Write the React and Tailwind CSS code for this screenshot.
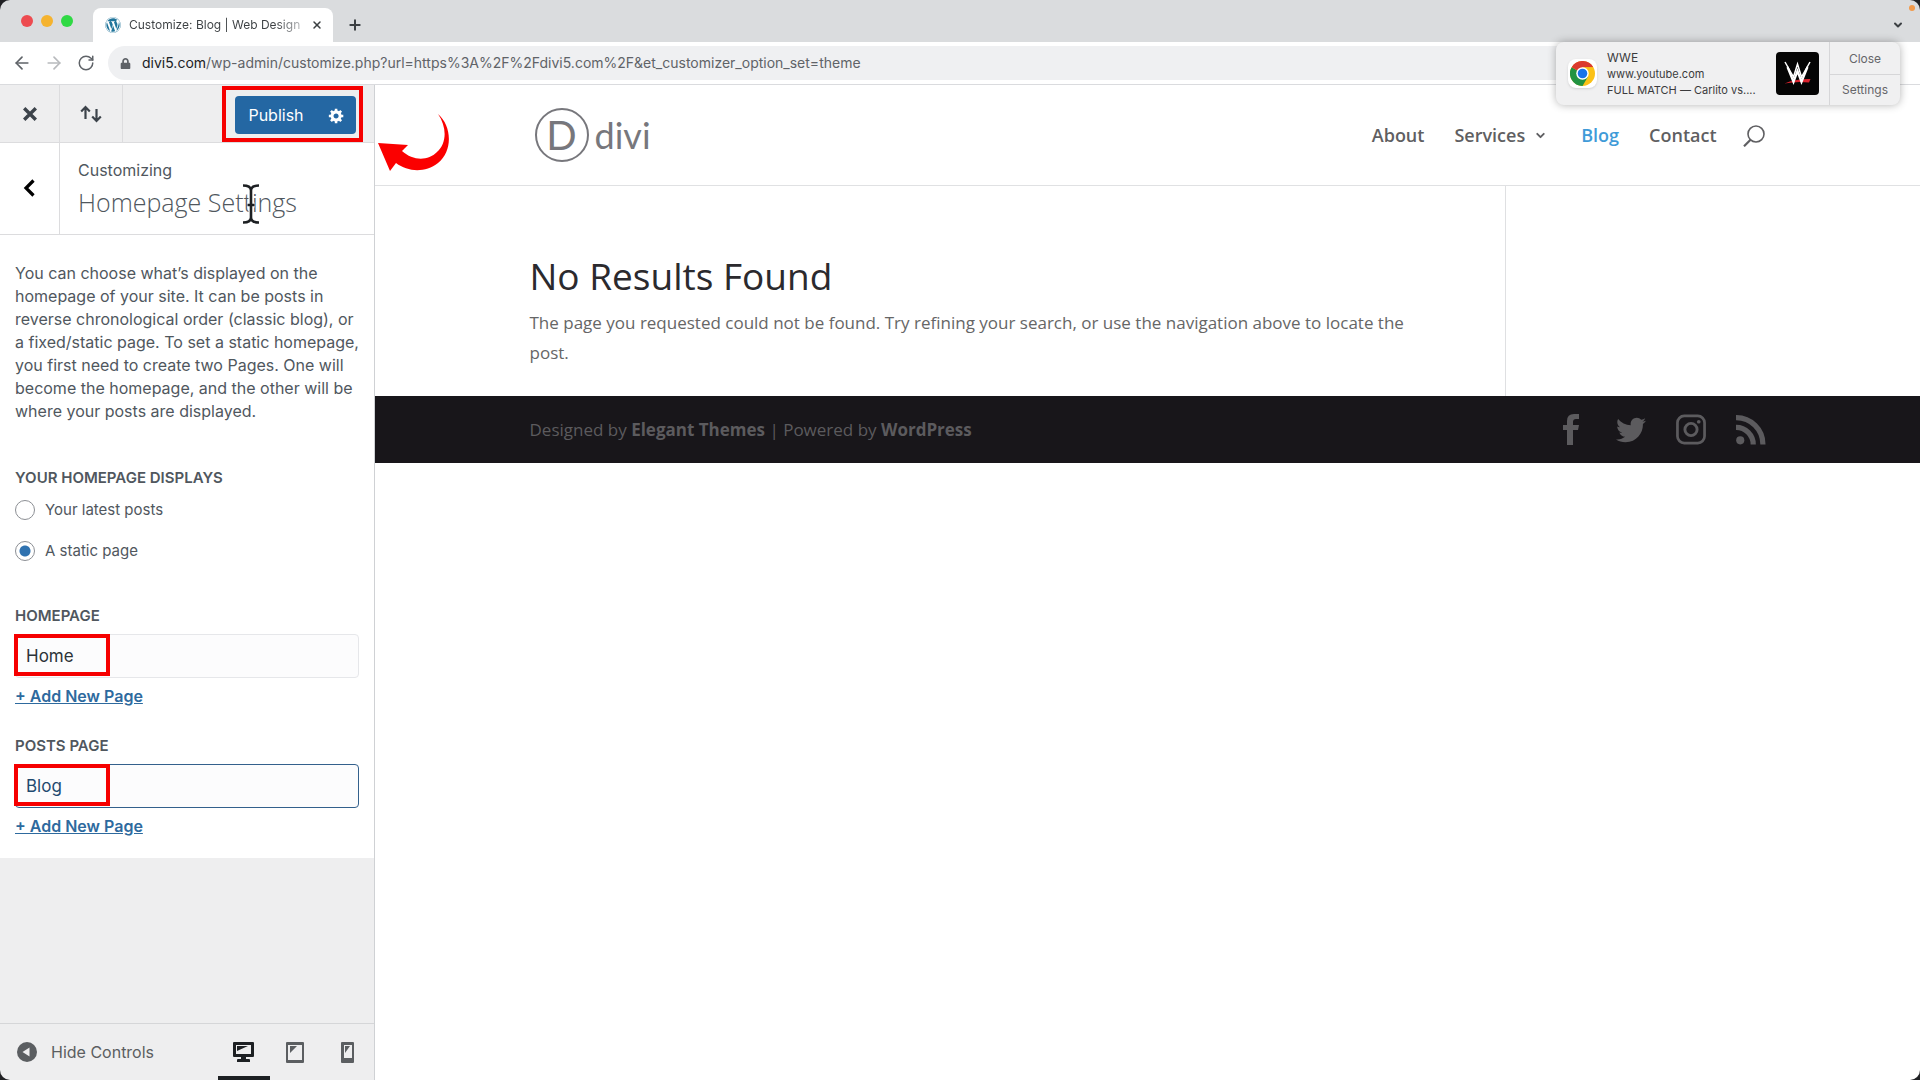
import { ArrowLeft, ArrowRight, ChevronDown, Plus, RotateCw, X } from 'lucide-react'
import { FaLock, FaTwitter, FaWordpress } from 'react-icons/fa'

const pages = ['Home', 'Blog', 'About', 'Contact']

function TabStrip() {
  return (
    <div className="flex h-[42px] items-end bg-[#dadcde]">
      <div className="flex gap-2 self-center pl-[21px] pr-5">
        <span className="size-3 rounded-full bg-[#ed4b50]" />
        <span className="size-3 rounded-full bg-[#f5b32f]" />
        <span className="size-3 rounded-full bg-[#2fd944]" />
      </div>
      <div className="flex h-[34px] w-60 items-center rounded-t-lg bg-white pl-3 pr-1.5">
        <FaWordpress className="size-4 shrink-0 text-[#21759b]" />
        <span className="ml-2 whitespace-nowrap bg-gradient-to-r from-[#3c4043] from-85% to-[#b5b7b9] bg-clip-text text-[12px] leading-5 text-transparent">
          Customize: Blog | Web Design
        </span>
        <button type="button" aria-label="Close tab" className="ml-auto p-1 text-[#3c4043]">
          <X className="size-3" strokeWidth={3} />
        </button>
      </div>
      <button type="button" aria-label="New tab" className="ml-2.5 self-center p-1 pt-3 text-[#3c4043]">
        <Plus className="size-4" strokeWidth={3} />
      </button>
      <button type="button" aria-label="Search tabs" className="ml-auto mr-4 self-center pt-2 text-[#3c4043]">
        <ChevronDown className="size-3" strokeWidth={4} />
      </button>
    </div>
  )
}

function AddressBar() {
  return (
    <div className="flex h-[43px] items-center border-b border-[#dadbde] bg-white pl-3 pr-16">
      <button type="button" aria-label="Back" className="text-[#5f6368]">
        <ArrowLeft className="size-5" strokeWidth={2} />
      </button>
      <button type="button" aria-label="Forward" className="ml-3 text-[#b8babd]">
        <ArrowRight className="size-5" strokeWidth={2} />
      </button>
      <button type="button" aria-label="Reload" className="ml-[13px] text-[#5f6368]">
        <RotateCw className="size-[18px]" strokeWidth={2} />
      </button>
      <div className="ml-[13px] flex h-[34px] flex-1 items-center rounded-full bg-[#eff0f2] pl-3">
        <FaLock className="size-[11px] text-[#5f6368]" />
        <p className="ml-[11px] text-[14px] leading-5 text-[#5f6368]">
          <span className="text-[#202124]">divi5.com</span>
          /wp-admin/customize.php?url=https%3A%2F%2Fdivi5.com%2F&amp;et_customizer_option_set=theme
        </p>
      </div>
    </div>
  )
}

function GearIcon() {
  return (
    <svg viewBox="0 0 20 20" className="size-[17px]" fill="currentColor" aria-hidden="true">
      <path d="M18 12h-2.180c-.170.700-.440 1.350-.810 1.930l1.540 1.540-2.100 2.100-1.540-1.540c-.580.360-1.230.630-1.910.790V19H8v-2.180c-.680-.160-1.330-.430-1.910-.790l-1.540 1.540-2.120-2.120 1.540-1.540c-.360-.580-.630-1.230-.790-1.910H1V9.030h2.170c.160-.700.440-1.350.800-1.940L2.430 5.550l2.100-2.100 1.540 1.540c.580-.370 1.240-.640 1.930-.810V2h3v2.180c.680.160 1.330.430 1.910.790l1.540-1.540 2.120 2.120-1.540 1.540c.360.590.640 1.240.800 1.940H18V12zm-8.500 1.500c1.660 0 3-1.340 3-3s-1.340-3-3-3-3 1.340-3 3 1.340 3 3 3z" />
    </svg>
  )
}

function PanelActions() {
  return (
    <div className="flex h-[58px] border-b border-[#dcdcde] bg-[#eeeeef]">
      <button type="button" aria-label="Close" className="flex w-[60px] items-center justify-center border-r border-[#dcdcde] text-[#3c434a]">
        <svg viewBox="0 0 14 14" className="size-[14px]" stroke="currentColor" strokeWidth="3.4" aria-hidden="true">
          <path d="M1.2 1.2l11.6 11.6M12.8 1.2L1.2 12.8" />
        </svg>
      </button>
      <button type="button" aria-label="Reorder" className="flex w-[63px] items-center justify-center border-r border-[#dcdcde] text-[#3c434a]">
        <svg viewBox="0 0 22 18" className="h-[18px] w-[22px]" fill="none" stroke="currentColor" strokeWidth="2.2" aria-hidden="true">
          <path d="M5.5 14V2.5M1.2 6.5L5.5 2l4.3 4.500M16.500 4v11.500M12.200 11.500l4.300 4.500 4.300-4.500" />
        </svg>
      </button>
      <div className="ml-auto mr-[11px] self-end border-4 border-[#f60000] pb-1 pl-[9px] pr-[3px] pt-1.5">
        <div className="flex h-[38px] w-[121px] overflow-hidden rounded bg-[#2467a3] text-white">
          <button type="button" className="w-[82px] text-base">Publish</button>
          <button type="button" aria-label="Publish settings" className="flex flex-1 items-center justify-center">
            <GearIcon />
          </button>
        </div>
      </div>
    </div>
  )
}

function PanelTitle() {
  return (
    <div className="relative flex h-[92px] border-b border-[#dcdcde] bg-white">
      <button type="button" aria-label="Back" className="flex w-[60px] items-center justify-center border-r border-[#dcdcde] pb-0.5 pr-0.5">
        <svg viewBox="0 0 12 18" className="h-[18px] w-3" fill="none" stroke="#000" strokeWidth="3.200" aria-hidden="true">
          <path d="M10.500 1.500L3 9l7.500 7.500" />
        </svg>
      </button>
      <div className="pl-[18px] pt-[15px] text-[#50575e]">
        <p className="text-base leading-6">Customizing</p>
        <h2 className="font-['Open_Sans',sans-serif] text-[25px] font-light leading-10">Homepage Settings</h2>
      </div>
      {/* text cursor resting on the heading */}
      <svg viewBox="0 0 18 40" className="absolute left-[242px] top-[41px] h-10 w-[18px]" fill="none" aria-hidden="true">
        <path d="M1 1.500c5 0 8 1.500 8 5v27c0 3.500-3 5-8 5M17 1.500c-5 0-8 1.500-8 5v27c0 3.500 3 5 8 5M5.500 21h7" stroke="#fff" strokeWidth="5" />
        <path d="M1 1.500c5 0 8 1.500 8 5v27c0 3.500-3 5-8 5M17 1.500c-5 0-8 1.500-8 5v27c0 3.500 3 5 8 5M5.500 21h7" stroke="#1d2023" strokeWidth="2.600" />
      </svg>
    </div>
  )
}

function DisplayOption({ label, defaultChecked }) {
  return (
    <label className="flex items-center gap-[10px] text-[15px] leading-5">
      <input
        type="radio"
        name="show_on_front"
        defaultChecked={defaultChecked}
        className="size-5 appearance-none rounded-full border border-[#8c8f94] bg-white checked:bg-[radial-gradient(circle,#2f72b0_5px,transparent_6px)]"
      />
      {label}
    </label>
  )
}

function PageSelect({ id, label, value, className }) {
  return (
    <div className="flex flex-col items-start">
      <label htmlFor={id} className="text-[15px] font-semibold uppercase leading-5">{label}</label>
      <div className="relative mt-2 w-full">
        <select
          id={id}
          defaultValue={value}
          className={`h-11 w-full appearance-none rounded border bg-[#fcfcfd] px-[10px] pt-0.5 text-[17px] ${className}`}
        >
          {pages.map((page) => (
            <option key={page}>{page}</option>
          ))}
        </select>
        <span className="pointer-events-none absolute -left-px top-0 h-[42px] w-24 border-4 border-[#f60000]" />
      </div>
      <a href="#new-page" className="mt-2 text-base font-semibold leading-5 text-[#2e6a9e] underline">+ Add New Page</a>
    </div>
  )
}

function ScreenIcon({ d, width }) {
  return (
    <svg viewBox={`0 0 ${width} 21`} width={width} height="21" fill="currentColor" fillRule="evenodd" aria-hidden="true">
      <path d={d} />
    </svg>
  )
}

function PanelFooter() {
  return (
    <div className="flex h-[57px] shrink-0 border-t border-[#d5d6d8] pl-[17px] text-[#5b5e61]">
      <button type="button" className="flex items-center gap-[14px] text-base">
        <svg viewBox="0 0 20 20" className="size-5" aria-hidden="true">
          <circle cx="10" cy="10" r="10" fill="currentColor" />
          <path d="M12.500 5.500v9L5.500 10z" fill="#eeeeef" />
        </svg>
        Hide Controls
      </button>
      <div className="ml-auto flex">
        <button type="button" aria-label="Desktop" className="flex w-[52px] items-center justify-center border-b-4 border-[#1d2023] pr-0.5 pt-1 text-[#1d2023]">
          <ScreenIcon width={21} d="M1 0h19q1 0 1 1v13q0 1-1 1h-7v2h3q1 0 1 1v2H4v-2q0-1 1-1h3v-2H1q-1 0-1-1V1q0-1 1-1zM3 3v9h15V3zM4 4h11L4 9z" />
        </button>
        <button type="button" aria-label="Tablet" className="flex w-[52px] items-center justify-center pr-0.5">
          <ScreenIcon width={18} d="M1 0h16q1 0 1 1v19q0 1-1 1H1q-1 0-1-1V1q0-1 1-1zM2 3v15h14V3zM4 4h7l-7 7z" />
        </button>
        <button type="button" aria-label="Mobile" className="flex w-[52px] items-center justify-center pr-0.5">
          <ScreenIcon width={13} d="M1 0h11q1 0 1 1v19q0 1-1 1H1q-1 0-1-1V1q0-1 1-1zM3 3v13h8V3zM4 4h5l-5 7z" />
        </button>
      </div>
    </div>
  )
}

function CustomizerPanel() {
  return (
    <aside className="flex w-[375px] shrink-0 flex-col border-r border-[#cfd1d4] bg-[#eeeeef]">
      <PanelActions />
      <PanelTitle />
      <form className="bg-white px-[15px] pb-[22px] pt-[27px] text-[#50575e]">
        <p className="text-base leading-[23px]">
          You can choose what’s displayed on the homepage of your site. It can be posts in reverse chronological order
          (classic blog), or a fixed/static page. To set a static homepage, you first need to create two Pages. One will
          become the homepage, and the other will be where your posts are displayed.
        </p>
        <fieldset className="mt-[45px]">
          <legend className="text-[15px] font-semibold uppercase leading-5">Your homepage displays</legend>
          <div className="mt-3 flex flex-col gap-[21px]">
            <DisplayOption label="Your latest posts" />
            <DisplayOption label="A static page" defaultChecked />
          </div>
        </fieldset>
        <div className="mt-[45px] flex flex-col gap-[30px]">
          <PageSelect id="homepage" label="Homepage" value="Home" className="border-[#e6e7ea] text-[#2c3338]" />
          <PageSelect id="posts-page" label="Posts page" value="Blog" className="border-[#33608c] text-[#1f4a70]" />
        </div>
      </form>
      <div className="flex-1" />
      <PanelFooter />
    </aside>
  )
}

function DiviLogo() {
  return (
    <a href="#home" className="flex items-center font-['Lato',sans-serif] text-[#77777c]">
      <span className="ml-[5px] flex size-[54px] items-center justify-center rounded-full border-2 border-[#77777c] text-[40px] leading-none">D</span>
      <span className="ml-[6px] text-4xl">divi</span>
    </a>
  )
}

function SiteHeader() {
  return (
    <header className="h-[101px] border-b border-[#e0e1e3]">
      <div className="mx-auto flex h-full w-4/5 items-center">
        <DiviLogo />
        <nav className="ml-auto flex items-center text-[18px] font-semibold text-[#5f5f62]">
          <a href="#about">About</a>
          <a href="#services" className="ml-[30px] flex items-center gap-[9px]">
            Services
            <ChevronDown className="size-[13px]" strokeWidth={3.5} />
          </a>
          <a href="#blog" className="ml-[34px] text-[#3f9bd8]">Blog</a>
          <a href="#contact" className="ml-[30px]">Contact</a>
        </nav>
        <button type="button" aria-label="Search" className="ml-[26px] pr-px pt-px text-[#5f5f62]">
          <svg viewBox="0 0 22 22" className="size-[22px]" fill="none" stroke="currentColor" strokeWidth="1.600" aria-hidden="true">
            <circle cx="13" cy="9" r="8" />
            <path d="M7.500 14.800L1 21.300" strokeWidth="2.200" />
          </svg>
        </button>
      </div>
    </header>
  )
}

function SiteFooter() {
  return (
    <footer className="bg-[#18161a] text-[#5c5b5e]">
      <div className="mx-auto flex h-[67px] w-4/5 items-center text-[17px]">
        <p>
          Designed by <a href="#elegant-themes" className="font-bold">Elegant Themes</a> | Powered by{' '}
          <a href="#wordpress" className="font-bold">WordPress</a>
        </p>
        <div className="ml-auto flex items-center gap-[30px]">
          <a href="#facebook" aria-label="Facebook" className="flex w-[30px] justify-center">
            <svg viewBox="0 0 16 31" className="h-[31px] w-4" fill="currentColor" aria-hidden="true">
              <path d="M4 31V16H0v-5h4V7q0-7 7-7h5v5h-3q-3 0-3 3v3h6l-1 5h-5v15z" />
            </svg>
          </a>
          <a href="#twitter" aria-label="Twitter" className="flex w-[30px] justify-center"><FaTwitter className="size-[30px]" /></a>
          <a href="#instagram" aria-label="Instagram" className="flex w-[30px] justify-center">
            <svg viewBox="0 0 31 31" className="size-[31px]" fill="none" stroke="currentColor" aria-hidden="true">
              <rect x="1.500" y="1.500" width="28" height="28" rx="7" strokeWidth="2.800" />
              <circle cx="15.500" cy="15.500" r="6.300" strokeWidth="3" />
              <circle cx="23.500" cy="7.500" r="1.900" fill="currentColor" stroke="none" />
            </svg>
          </a>
          <a href="#rss" aria-label="RSS" className="flex w-[30px] justify-center">
            <svg viewBox="0 0 31 31" className="size-[31px]" fill="none" stroke="currentColor" strokeWidth="5.400" aria-hidden="true">
              <path d="M0 3.200A27.500 27.500 0 0 1 27.800 31M0 13.200A17.700 17.700 0 0 1 17.800 31" />
              <circle cx="4.400" cy="26.700" r="4.200" fill="currentColor" stroke="none" />
            </svg>
          </a>
        </div>
      </div>
    </footer>
  )
}

function SitePreview() {
  return (
    <main className="relative min-w-0 flex-1 bg-white font-['Open_Sans',sans-serif]">
      <SiteHeader />
      <div className="mx-auto flex w-4/5">
        <article className="w-[79%] border-r border-[#dfe0e2] pb-7 pr-16 pt-[69px] text-[#666]">
          <h1 className="text-[37px] leading-[42px] text-[#2b2a2e]">No Results Found</h1>
          <p className="mt-[11px] text-[17px] leading-[30px]">
            The page you requested could not be found. Try refining your search, or use the navigation above to locate
            the post.
          </p>
        </article>
      </div>
      <SiteFooter />
      {/* callout arrow pointing at the publish button */}
      <svg viewBox="0 0 72 58" className="absolute left-0.5 top-7 h-[58px] w-[72px]" fill="#fb0000" aria-hidden="true">
        <path d="M61 1C75 13 76 38 61 50C48 60 31 59 19 50L13 58L1 30L31 32L25 38C36 48 51 48 60 39C70 30 70 14 61 1Z" />
      </svg>
    </main>
  )
}

function ChromeLogo() {
  return (
    <span className="flex size-[29px] shrink-0 items-center justify-center rounded-lg bg-white shadow">
      <svg viewBox="0 0 24 24" className="size-[25px]" aria-hidden="true">
        <circle cx="12" cy="12" r="12" fill="#fbc116" />
        <path d="M12 12L1.600 6A12 12 0 0 0 12 24l5.200-9z" fill="#229342" />
        <path d="M12 12L1.600 6A12 12 0 0 1 22.400 6H12z" fill="#db3a2e" />
        <path d="M12 6h10.400L17.200 15z" fill="#fbc116" />
        <circle cx="12" cy="12" r="6" fill="#fff" />
        <circle cx="12" cy="12" r="4.600" fill="#1a73e8" />
      </svg>
    </span>
  )
}

function WweLogo() {
  return (
    <svg viewBox="0 0 43 43" className="size-[43px] shrink-0 rounded-sm" aria-hidden="true">
      <rect width="43" height="43" fill="#050505" />
      <path d="M8.500 31.500Q20 26.500 34.500 27l-1.500 3.500q-12-1.500-24.500 1z" fill="#d9232e" />
      <path d="M9 10l8.500 15 4-13 4 13L34 10" fill="none" stroke="#fff" strokeWidth="1.500" />
      <path d="M11.500 15l6 15 4-11 4 11 6-15" fill="none" stroke="#fff" strokeWidth="2.200" />
    </svg>
  )
}

function Notification() {
  return (
    <div className="absolute right-5 top-[42px] flex h-[63px] w-[344px] overflow-hidden rounded-lg bg-[#f0f0f1] shadow-[0_0_8px_rgba(0,0,0,0.3)]">
      <div className="flex flex-1 items-center pl-3 pr-[10px]">
        <ChromeLogo />
        <div className="ml-[10px] flex-1 text-[11px] leading-4 text-[#3b3b3d]">
          <p className="text-[12px]">WWE</p>
          <p>www.youtube.com</p>
          <p>FULL MATCH — Carlito vs....</p>
        </div>
        <WweLogo />
      </div>
      <div className="flex w-[71px] flex-col border-l border-[#d6d6d8] text-[12px] text-[#66666a]">
        <button type="button" className="flex-1 border-b border-[#d6d6d8] pt-0.5">Close</button>
        <button type="button" className="flex-1">Settings</button>
      </div>
    </div>
  )
}

export default function App() {
  return (
    <div className="min-h-screen bg-[#202124] font-['Inter',sans-serif]">
      <div className="relative flex min-h-screen flex-col overflow-hidden rounded-[10px]">
        <TabStrip />
        <AddressBar />
        <div className="flex flex-1">
          <CustomizerPanel />
          <SitePreview />
        </div>
        <Notification />
        <span className="absolute right-[5px] top-[5px] size-[6px] rounded-full bg-[#f19a4b]" />
      </div>
    </div>
  )
}
